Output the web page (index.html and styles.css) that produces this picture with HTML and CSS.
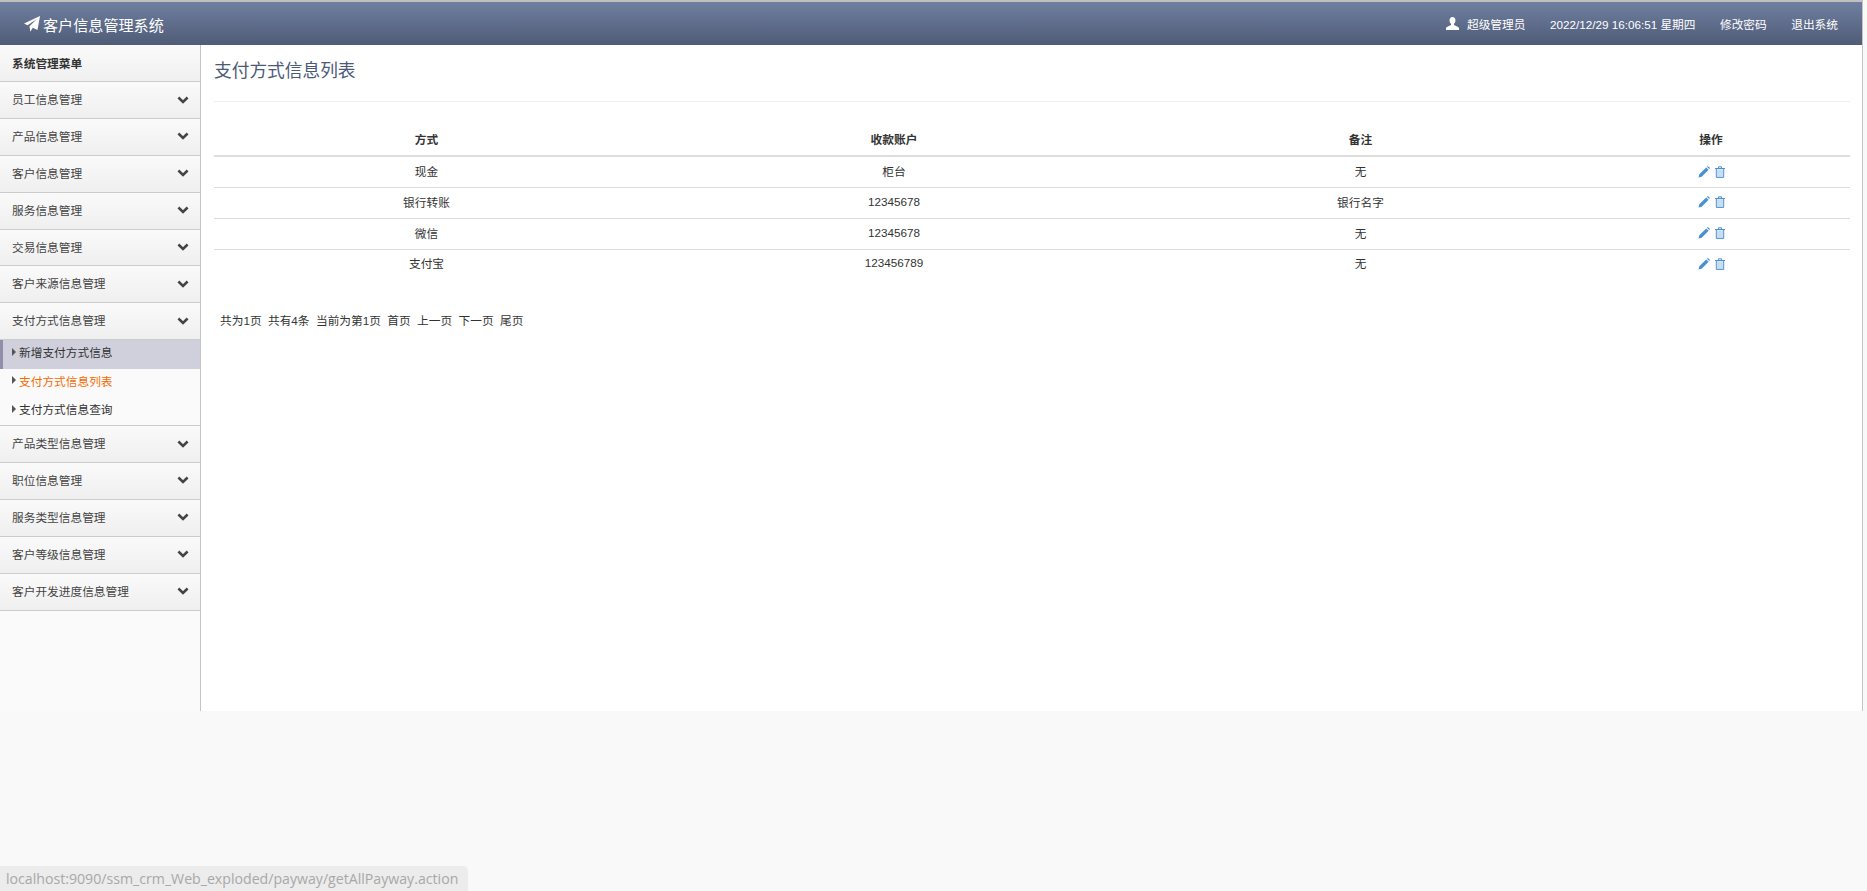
FILE: index.html
```html
<!DOCTYPE html>
<html lang="zh-CN">
<head>
<meta charset="utf-8">
<title>客户信息管理系统</title>
<link rel="stylesheet" href="styles.css">
</head>
<body>
<svg class="defs" width="0" height="0" aria-hidden="true">
  <symbol id="chev" viewBox="0 0 12 8"><path d="M1.400 1.500 6 6l4.600-4.500" fill="none" stroke="currentColor" stroke-width="2.500"/></symbol>
  <symbol id="caret" viewBox="0 0 4 8"><path d="M0 0l4 4-4 4z" fill="currentColor"/></symbol>
  <symbol id="pencil" viewBox="0 0 12 12"><path d="M0.500 11.500l.8-3.200L8.200 1.400l2.400 2.400-6.900 6.900zM8.900.7l.6-.4q.5-.2.9.1l1.200 1.200q.3.4.1.9l-.4.6z" fill="currentColor"/></symbol>
  <symbol id="trash" viewBox="0 0 12 12"><path d="M2.800 3.300h6.400v7.600H2.800z" fill="currentColor" fill-opacity=".3"/><path d="M1 2.500h10M4.500 2.300V.8h3v1.500M2.300 3v8.400h7.400V3" fill="none" stroke="currentColor" stroke-width="1"/></symbol>
</svg>
<div class="app">
  <header class="topbar">
    <div class="brand">
      <svg class="plane" viewBox="0 0 16 16"><path d="M16 0 13.500 14 8.800 11.800 6.300 15.800 5.500 10.300 13 3 3.500 9.200 0 7.500z" fill="currentColor"/></svg>
      <span>客户信息管理系统</span>
    </div>
    <nav class="topnav">
      <span class="who">
        <svg class="user" viewBox="0 0 14 14"><path d="M7 0c2 0 3.200 1.500 3.200 3.700 0 1.700-.8 3-1.600 3.700v1.200l4.400 2.200q1 .5 1 1.200V14H0v-2q0-.7 1-1.200l4.400-2.200V7.400C4.600 6.700 3.800 5.400 3.800 3.700 3.800 1.500 5 0 7 0z" fill="currentColor"/></svg>
        超级管理员
      </span>
      <span>2022/12/29 16:06:51 星期四</span>
      <a>修改密码</a>
      <a>退出系统</a>
    </nav>
  </header>
  <div class="body">
    <aside class="side">
      <div class="side-title">系统管理菜单</div>
      <div class="mi"><span>员工信息管理</span><svg class="chev"><use href="#chev"/></svg></div>
      <div class="mi"><span>产品信息管理</span><svg class="chev"><use href="#chev"/></svg></div>
      <div class="mi"><span>客户信息管理</span><svg class="chev"><use href="#chev"/></svg></div>
      <div class="mi"><span>服务信息管理</span><svg class="chev"><use href="#chev"/></svg></div>
      <div class="mi"><span>交易信息管理</span><svg class="chev"><use href="#chev"/></svg></div>
      <div class="mi"><span>客户来源信息管理</span><svg class="chev"><use href="#chev"/></svg></div>
      <div class="mi"><span>支付方式信息管理</span><svg class="chev"><use href="#chev"/></svg></div>
      <ul class="sub">
        <li class="hover"><svg class="caret"><use href="#caret"/></svg>新增支付方式信息</li>
        <li class="current"><svg class="caret"><use href="#caret"/></svg>支付方式信息列表</li>
        <li><svg class="caret"><use href="#caret"/></svg>支付方式信息查询</li>
      </ul>
      <div class="mi"><span>产品类型信息管理</span><svg class="chev"><use href="#chev"/></svg></div>
      <div class="mi"><span>职位信息管理</span><svg class="chev"><use href="#chev"/></svg></div>
      <div class="mi"><span>服务类型信息管理</span><svg class="chev"><use href="#chev"/></svg></div>
      <div class="mi"><span>客户等级信息管理</span><svg class="chev"><use href="#chev"/></svg></div>
      <div class="mi"><span>客户开发进度信息管理</span><svg class="chev"><use href="#chev"/></svg></div>
    </aside>
    <main class="main">
      <h1 class="title">支付方式信息列表</h1>
      <table class="grid">
        <colgroup><col class="c1"><col class="c2"><col class="c3"><col class="c4"></colgroup>
        <thead><tr><th>方式</th><th>收款账户</th><th>备注</th><th>操作</th></tr></thead>
        <tbody>
          <tr><td>现金</td><td>柜台</td><td>无</td><td class="ops"><svg class="ico"><use href="#pencil"/></svg><svg class="ico"><use href="#trash"/></svg></td></tr>
          <tr><td>银行转账</td><td>12345678</td><td>银行名字</td><td class="ops"><svg class="ico"><use href="#pencil"/></svg><svg class="ico"><use href="#trash"/></svg></td></tr>
          <tr><td>微信</td><td>12345678</td><td>无</td><td class="ops"><svg class="ico"><use href="#pencil"/></svg><svg class="ico"><use href="#trash"/></svg></td></tr>
          <tr><td>支付宝</td><td>123456789</td><td>无</td><td class="ops"><svg class="ico"><use href="#pencil"/></svg><svg class="ico"><use href="#trash"/></svg></td></tr>
        </tbody>
      </table>
      <div class="pager"><span>共为1页</span><span>共有4条</span><span>当前为第1页</span><a>首页</a><a>上一页</a><a>下一页</a><a>尾页</a></div>
    </main>
  </div>
</div>
<div class="status">localhost:9090/ssm_crm_Web_exploded/payway/getAllPayway.action</div>
</body>
</html>
```
FILE: styles.css
```css
* { box-sizing: border-box; }
html, body { margin: 0; height: 100%; overflow: hidden; }
body {
  background: #f9f9f9;
  font-family: "Liberation Sans", "Noto Sans CJK SC", sans-serif;
  font-size: 11.7px;
  color: #333;
  position: relative;
}
.defs { display: block; height: 0; }
.app {
  width: 1863px;
  height: 711px;
  display: flex;
  flex-direction: column;
  background: #fff;
  border-right: 1px solid #c4c4c4;
}
.topbar {
  height: 45px;
  flex: none;
  display: flex;
  align-items: center;
  justify-content: space-between;
  padding: 0 24px 0 24px;
  color: #fff;
  border-top: 2px solid #c0c0c0;
  background: linear-gradient(#6f7f9f, #4f5c77);
}
.brand { display: flex; align-items: center; font-size: 15.1px; gap: 3px; }
.plane { width: 16px; height: 16px; color: #fff; }
.topnav { display: flex; align-items: center; gap: 24.5px; }
.who { display: flex; align-items: center; gap: 8px; }
.user { width: 13px; height: 13px; }
.body { flex: 1; display: flex; min-height: 0; }
.side {
  width: 201px;
  flex: none;
  background: #fafafa;
  border-right: 1px solid #c4c4c4;
}
.side-title {
  height: 37.2px;
  line-height: 37px;
  padding-left: 12px;
  font-weight: bold;
  color: #333;
  background: linear-gradient(#fafafa, #f0f0f0);
  border-bottom: 1px solid #ccc;
}
.mi {
  height: 36.86px;
  display: flex;
  align-items: center;
  justify-content: space-between;
  padding: 0 11px 3px 12px;
  color: #444;
  background: linear-gradient(#fafafa, #efefef);
  border-bottom: 1px solid #ccc;
}
.chev { width: 12px; height: 8px; color: #444; margin-top: 2px; }
.sub { list-style: none; margin: 0; padding: 0; background: #fafafa; border-bottom: 1px solid #ccc; height: 86px; }
.sub li {
  height: 28.330px;
  display: flex;
  align-items: center;
  padding: 0 0 5px 12px;
  color: #333;
}
.sub li.hover { background: #d0d0dc; border-left: 3px solid #8f8fac; padding-left: 9px; }
.sub li.current { color: #f56b00; }
.caret { width: 4px; height: 8px; color: #555; margin-right: 3px; }
.main { flex: 1; padding: 0 12px 0 13px; min-width: 0; }
.title {
  margin: 0;
  height: 57px;
  padding-top: 14px;
  font-size: 17.7px;
  line-height: 24px;
  font-weight: normal;
  color: #4a5a78;
  border-bottom: 1px solid #eee;
}
.grid {
  width: 100%;
  margin-top: 20px;
  border-collapse: collapse;
  table-layout: fixed;
}
.c1 { width: 425px; }
.c2 { width: 510px; }
.c3 { width: 423px; }
.grid th {
  height: 34px;
  font-weight: bold;
  color: #333;
  text-align: center;
  border-bottom: 2px solid #ddd;
  padding: 0;
}
.grid td {
  height: 31px;
  text-align: center;
  border-bottom: 1px solid #ddd;
  padding: 0 0 2px;
}
.grid .ops { padding-left: 2px; }
.grid tbody tr:last-child td { border-bottom: 0; padding-bottom: 4px; }
.ico { width: 12px; height: 12px; color: #4a90d2; margin: 0 2px; vertical-align: middle; }
.pager { display: flex; gap: 6.4px; padding: 31px 0 0 6px; color: #333; }
.status {
  position: absolute;
  left: 0;
  bottom: 0;
  width: 468px;
  height: 25px;
  line-height: 25px;
  padding-left: 6px;
  font-family: "Open Sans", sans-serif;
  font-size: 14.15px;
  color: #a8a8a8;
  background: #ececec;
  border-top-right-radius: 5px;
  white-space: nowrap;
}
```
